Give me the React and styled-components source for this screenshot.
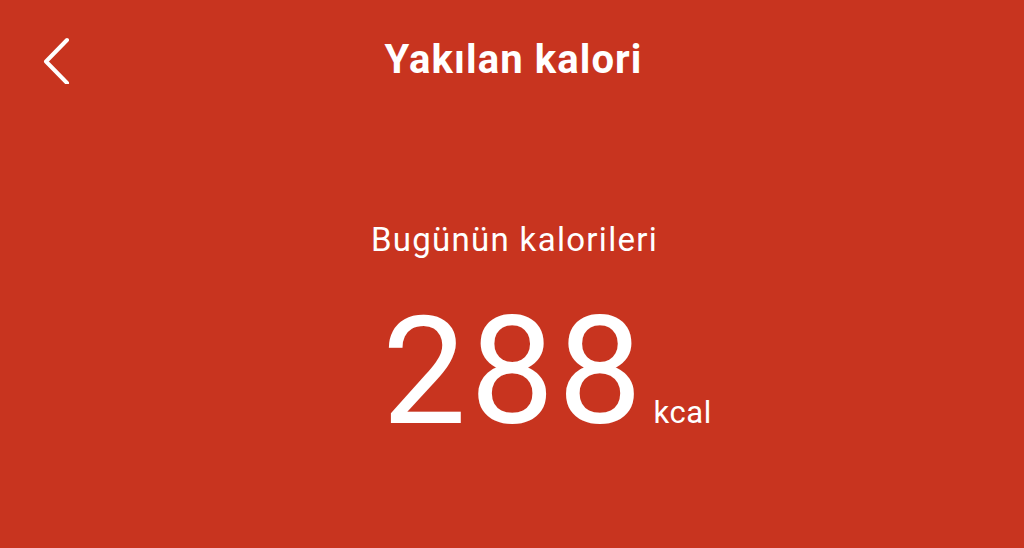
import React from "react";
import styled, { createGlobalStyle } from "styled-components";

const Global = createGlobalStyle`
  html, body { margin: 0; padding: 0; }
  body { background: #C8341F; font-family: Roboto, "Noto Sans", sans-serif; }
`;

const Page = styled.div`
  width: 1024px;
  height: 548px;
  background: #C8341F;
  color: #fff;
  display: flex;
  flex-direction: column;
  overflow: hidden;
`;

const Header = styled.header`
  height: 48px;
  margin-top: 36px;
  display: grid;
  grid-template-columns: 120px 1fr 120px;
  align-items: center;
`;

const BackButton = styled.button`
  background: none;
  border: 0;
  padding: 0;
  margin-left: 42px;
  width: 28px;
  height: 48px;
  display: flex;
  color: #fff;
  cursor: pointer;
`;

const Title = styled.h1`
  margin: 0;
  text-align: center;
  font-size: 40px;
  font-weight: 700;
  line-height: 48px;
  letter-spacing: 1.1px;
  padding-left: 3px;
`;

const Body = styled.main`
  display: flex;
  flex-direction: column;
  align-items: center;
  padding-top: 136px;
`;

const Label = styled.div`
  font-size: 33px;
  line-height: 40px;
  letter-spacing: 1.3px;
  padding-left: 5px;
`;

const ValueRow = styled.div`
  display: flex;
  align-items: baseline;
  margin-top: 37px;
  padding-left: 70px;
`;

const Value = styled.span`
  font-size: 150px;
  font-weight: 400;
  line-height: 150px;
  letter-spacing: 3.5px;
`;

const Unit = styled.span`
  font-size: 31px;
  letter-spacing: 0.6px;
  margin-left: 8px;
`;

export default function App() {
  return (
    <>
      <Global />
      <Page>
        <Header>
          <BackButton aria-label="Geri">
            <svg width="28" height="48" viewBox="0 0 28 48" fill="none">
              <path d="M25 4 L4 25.5 L25 47" stroke="#fff" strokeWidth="4" strokeLinecap="round" strokeLinejoin="round" />
            </svg>
          </BackButton>
          <Title>Yakılan kalori</Title>
          <div />
        </Header>
        <Body>
          <Label>Bugünün kalorileri</Label>
          <ValueRow>
            <Value>288</Value>
            <Unit>kcal</Unit>
          </ValueRow>
        </Body>
      </Page>
    </>
  );
}
